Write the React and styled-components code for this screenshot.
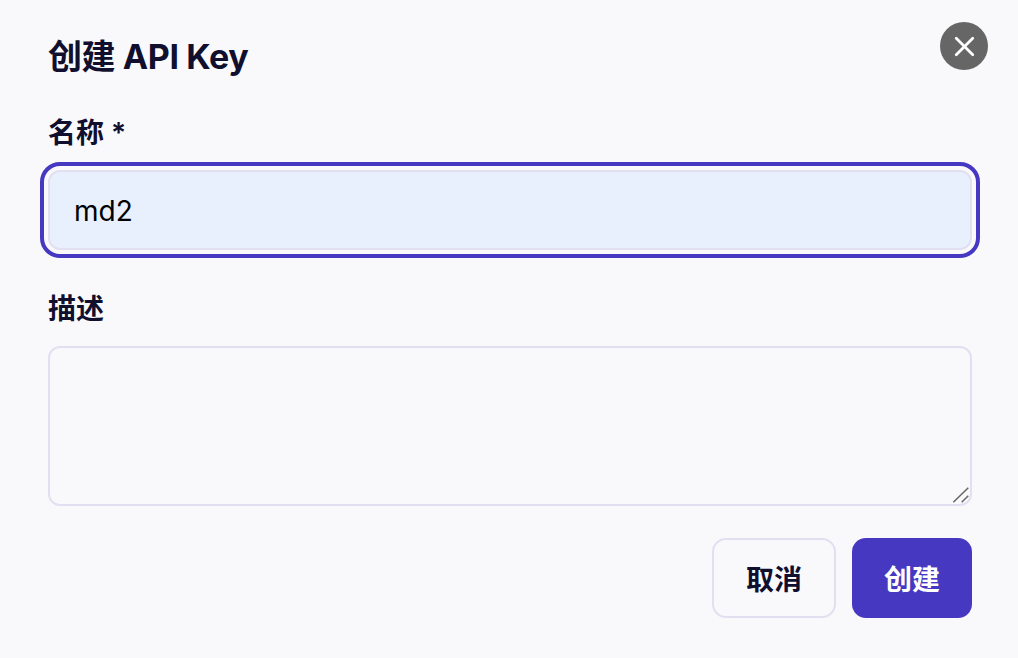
import React from 'react';
import styled, { createGlobalStyle } from 'styled-components';
import { X } from 'lucide-react';

const GlobalStyle = createGlobalStyle`
	html, body {
		margin: 0;
		padding: 0;
		background-color: #f9f9fc;
	}
	* {
		box-sizing: border-box;
	}
`;

const fontStack = `Inter, "Noto Sans CJK SC", sans-serif`;

const Modal = styled.div`
	position: relative;
	width: 1018px;
	height: 658px;
	padding: 36px 46px 40px 48px;
	background-color: #f9f9fc;
	font-family: ${fontStack};
	color: #110f2e;
`;

const Title = styled.h2`
	margin: 0 0 38px;
	font-size: 34px;
	line-height: 42px;
	font-weight: 700;
	letter-spacing: -0.4px;
`;

const CloseButton = styled.button`
	position: absolute;
	top: 22px;
	right: 30px;
	width: 48px;
	height: 48px;
	padding: 0;
	display: flex;
	align-items: center;
	justify-content: center;
	border: none;
	border-radius: 50%;
	background-color: #666666;
	color: #ffffff;
`;

const Field = styled.div`
	display: flex;
	flex-direction: column;
	gap: 20px;
	margin-bottom: ${(props) => props.$spacing}px;
`;

const Label = styled.label`
	font-size: 28px;
	line-height: 34px;
	font-weight: 600;
`;

const TextInput = styled.input`
	width: 100%;
	height: 80px;
	padding: 2px 24px 0;
	border: 2px solid #e2e0f0;
	border-radius: 12px;
	background-color: #e8f0fe;
	font-family: ${fontStack};
	font-size: 28px;
	color: #000000;
	outline: 4px solid #4638c0;
	outline-offset: 4px;
`;

const TextAreaWrap = styled.div`
	position: relative;
	height: 160px;
`;

const TextArea = styled.textarea`
	display: block;
	width: 100%;
	height: 100%;
	padding: 16px 24px;
	border: 2px solid #e2e0f0;
	border-radius: 12px;
	background-color: #f9f9fc;
	font-family: ${fontStack};
	font-size: 28px;
	outline: none;
	resize: none;
`;

const ResizeGrip = styled.svg`
	position: absolute;
	right: 2px;
	bottom: 2px;
	width: 18px;
	height: 18px;
	pointer-events: none;
`;

const Actions = styled.div`
	display: flex;
	justify-content: flex-end;
	gap: 16px;
`;

const Button = styled.button`
	height: 80px;
	width: ${(props) => (props.$primary ? '120px' : '124px')};
	padding: 0;
	border: ${(props) => (props.$primary ? 'none' : '2px solid #e2e0f0')};
	border-radius: 14px;
	background-color: ${(props) => (props.$primary ? '#4638c0' : '#f9f9fc')};
	color: ${(props) => (props.$primary ? '#ffffff' : '#110f2e')};
	font-family: ${fontStack};
	font-size: 28px;
	font-weight: 600;
`;

export default function App() {
	return (
		<>
			<GlobalStyle />
			<Modal>
				<Title>创建 API Key</Title>
				<CloseButton aria-label="关闭">
					<X size={33} strokeWidth={2} />
				</CloseButton>
				<Field $spacing={42}>
					<Label>名称 *</Label>
					<TextInput value="md2" readOnly />
				</Field>
				<Field $spacing={32}>
					<Label>描述</Label>
					<TextAreaWrap>
						<TextArea readOnly />
						<ResizeGrip viewBox="0 0 18 18" fill="none" stroke="#666666" strokeWidth="1.5">
							<path d="M1.3 16.3 16.3 1.7" />
							<path d="M9.7 16.3 16.3 9.7" />
						</ResizeGrip>
					</TextAreaWrap>
				</Field>
				<Actions>
					<Button>取消</Button>
					<Button $primary>创建</Button>
				</Actions>
			</Modal>
		</>
	);
}
